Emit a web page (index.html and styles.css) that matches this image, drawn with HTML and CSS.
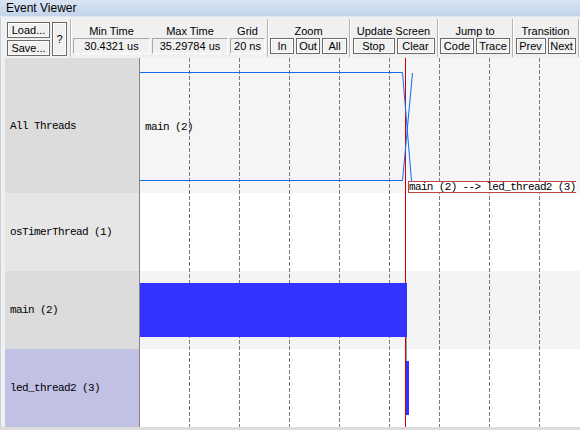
FILE: index.html
```html
<!DOCTYPE html>
<html>
<head>
<meta charset="utf-8">
<link rel="stylesheet" href="styles.css">
</head>
<body>
<div class="window">
  <div class="titlebar">Event Viewer</div>
  <div class="toolbar">
    <div class="group g-file">
      <div class="filecol">
        <button class="btn btn-file">Load...</button>
        <button class="btn btn-file">Save...</button>
      </div>
      <button class="btn btn-help">?</button>
    </div>
    <div class="group g-time">
      <div class="field f-min"><div class="glabel">Min Time</div><div class="value">30.4321 us</div></div>
      <div class="field f-max"><div class="glabel">Max Time</div><div class="value">35.29784 us</div></div>
      <div class="field f-grid"><div class="glabel">Grid</div><div class="value">20 ns</div></div>
    </div>
    <div class="group g-zoom">
      <div class="glabel">Zoom</div>
      <div class="btnrow"><button class="btn w-in">In</button><button class="btn w-out">Out</button><button class="btn w-all">All</button></div>
    </div>
    <div class="group g-update">
      <div class="glabel">Update Screen</div>
      <div class="btnrow"><button class="btn w-stop">Stop</button><button class="btn w-clear">Clear</button></div>
    </div>
    <div class="group g-jump">
      <div class="glabel">Jump to</div>
      <div class="btnrow"><button class="btn w-code">Code</button><button class="btn w-trace">Trace</button></div>
    </div>
    <div class="group g-trans">
      <div class="glabel">Transition</div>
      <div class="btnrow"><button class="btn w-prev">Prev</button><button class="btn w-next">Next</button></div>
    </div>
  </div>
  <div class="chart">
    <div class="edge"></div>
    <div class="labels">
      <div class="lrow r-all">All Threads</div>
      <div class="lrow r-timer">osTimerThread (1)</div>
      <div class="lrow r-main">main (2)</div>
      <div class="lrow r-led">led_thread2 (3)</div>
    </div>
    <div class="plot">
      <div class="prow p-all"></div>
      <div class="prow p-timer"></div>
      <div class="prow p-main"></div>
      <div class="prow p-led"></div>
      <svg class="overlay" width="440" height="369" viewBox="0 0 440 369">
        <g class="grid">
          <line x1="49.5" y1="0" x2="49.5" y2="369"/>
          <line x1="99.5" y1="0" x2="99.5" y2="369"/>
          <line x1="149.5" y1="0" x2="149.5" y2="369"/>
          <line x1="199.5" y1="0" x2="199.5" y2="369"/>
          <line x1="249.5" y1="0" x2="249.5" y2="369"/>
          <line x1="299.5" y1="0" x2="299.5" y2="369"/>
          <line x1="349.5" y1="0" x2="349.5" y2="369"/>
          <line x1="399.5" y1="0" x2="399.5" y2="369"/>
        </g>
        <line class="cursor" x1="265.5" y1="0" x2="265.5" y2="369"/>
        <g class="wave">
          <polyline points="0,14.5 262.5,14.5 271.5,123"/>
          <polyline points="0,122.5 262.5,122.5 272.5,15"/>
        </g>
        <text class="canvas-text" x="5" y="72">main (2)</text>
        <rect class="bar" x="0" y="225" width="267" height="54"/>
        <line class="link" x1="266.5" y1="279" x2="266.5" y2="303"/>
        <rect class="bar" x="266" y="303" width="3" height="54"/>
      </svg>
      <div class="tooltip">main (2) --&gt; led_thread2 (3)</div>
    </div>
  </div>
  <div class="bottom"></div>
</div>
</body>
</html>
```

FILE: styles.css
```css
* { box-sizing: border-box; }
html, body { margin: 0; padding: 0; }
body {
  width: 580px;
  height: 430px;
  overflow: hidden;
  background: #f0f0f0;
  font-family: "Liberation Sans", Arial, sans-serif;
  font-size: 11px;
  color: #000;
}
.window { width: 580px; height: 430px; display: flex; flex-direction: column; }

.titlebar {
  height: 17px;
  line-height: 16px;
  padding-left: 6px;
  font-size: 12px;
  background: linear-gradient(#d8e4f3, #c3d4ea);
  border-bottom: 1px solid #dde8f5;
}

.toolbar {
  height: 41px;
  display: flex;
  background: #f0f0f0;
  border-left: 1px solid #c4d2e8;
}
.group {
  display: flex;
  flex-direction: column;
  align-items: center;
  padding-top: 5px;
  border-right: 1px solid #b4b4b4;
  box-shadow: 1px 0 0 #fff;
  margin-top: 2px;
  margin-bottom: 1px;
}
.g-file { width: 70px; flex-direction: row; align-items: flex-start; padding-left: 6px; padding-top: 3px; }
.filecol { display: flex; flex-direction: column; gap: 2px; }
.g-time { width: 197px; flex-direction: row; align-items: flex-start; padding-left: 2px; gap: 2px; }
.g-zoom { width: 82px; }
.g-update { width: 88px; }
.g-jump { width: 75px; }
.g-trans { width: 66px; }

.glabel { height: 14px; line-height: 14px; text-align: center; white-space: nowrap; }
.field { display: flex; flex-direction: column; }
.f-min { width: 77px; }
.f-max { width: 76px; }
.f-grid { width: 35px; }
.value {
  height: 16px;
  line-height: 14px;
  text-align: center;
  white-space: nowrap;
  border: 1px solid;
  border-color: #a8a8a8 #fff #fff #a8a8a8;
  background: #f0f0f0;
}

.btnrow { display: flex; gap: 2px; }
.btn {
  font: inherit;
  color: #000;
  height: 16px;
  padding: 0;
  margin: 0;
  line-height: 13px;
  background: #f0f0f0;
  border: 1px solid #6a6a6a;
  box-shadow: inset 0 0 0 1px #fff;
  text-align: center;
  white-space: nowrap;
}
.btn-file { width: 43px; }
.btn-help { width: 15px; height: 34px; margin-left: 2px; }
.w-in { width: 24px; }
.w-out { width: 24px; }
.w-all { width: 25px; }
.w-stop { width: 42px; }
.w-clear { width: 38px; }
.w-code { width: 34px; }
.w-trace { width: 34px; }
.w-prev { width: 30px; }
.w-next { width: 28px; }

.chart { display: flex; height: 369px; }
.edge { width: 5px; background: #f0f0f0; border-left: 1px solid #c4d2e8; }
.labels {
  width: 135px;
  display: flex;
  flex-direction: column;
  border-right: 1px solid #858585;
}
.lrow {
  display: flex;
  align-items: center;
  padding-left: 5px;
  font-family: "Liberation Mono", "DejaVu Sans Mono", monospace;
  font-size: 11px;
  letter-spacing: -0.6px;
  white-space: nowrap;
}
.r-all { height: 135px; background: #dcdcdc; }
.r-timer { height: 78px; background: #e6e6e6; }
.r-main { height: 78px; background: #dcdcdc; }
.r-led { height: 78px; background: #c1c1e6; }

.plot { position: relative; flex: 1; display: flex; flex-direction: column; overflow: hidden; }
.prow { flex: none; }
.p-all { height: 135px; background: #f5f5f5; }
.p-timer { height: 78px; background: #fff; }
.p-main { height: 78px; background: #f4f4f4; }
.p-led { height: 78px; background: #fff; }

.overlay { position: absolute; left: 0; top: 0; }
.grid line { stroke: #7a7a7a; stroke-width: 1; stroke-dasharray: 4 2; }
.cursor { stroke: #d40000; stroke-width: 1; }
.wave polyline { fill: none; stroke: #1469f0; stroke-width: 1; }
.canvas-text {
  font-family: "Liberation Mono", "DejaVu Sans Mono", monospace;
  font-size: 11px;
  letter-spacing: -0.6px;
  fill: #000;
}
.bar { fill: #3333ff; }
.link { stroke: #a0a0a0; stroke-width: 1; }

.tooltip {
  position: absolute;
  left: 268px;
  top: 123px;
  height: 12px;
  padding: 0;
  line-height: 10px;
  background: #fff;
  border: 1px solid #c04444;
  border-right: none;
  font-family: "Liberation Mono", "DejaVu Sans Mono", monospace;
  font-size: 11px;
  letter-spacing: -0.65px;
  white-space: nowrap;
}

.bottom { height: 3px; background: #dcdcdc; }
```
